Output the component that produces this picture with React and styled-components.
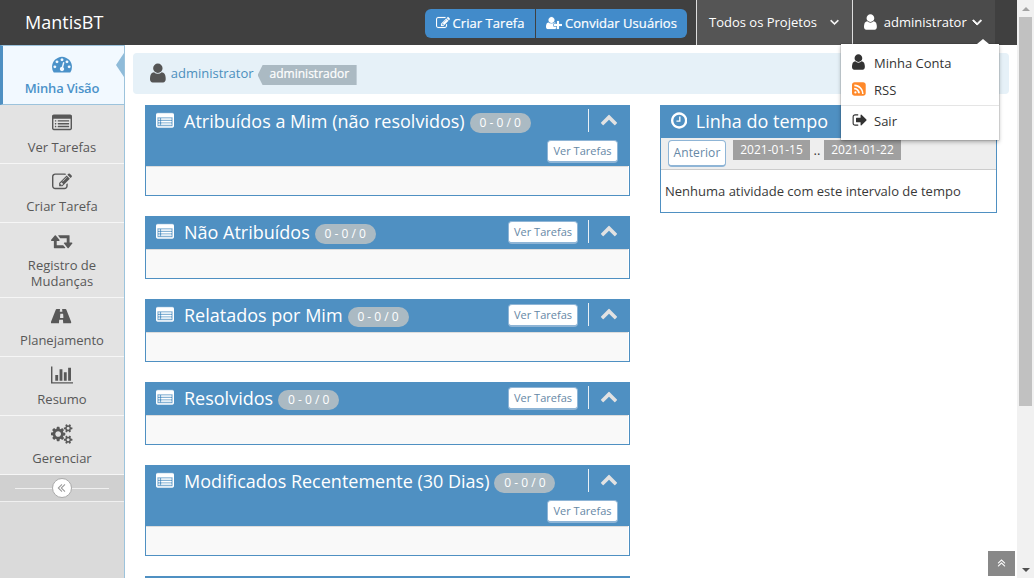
import React from 'react';
import styled, { createGlobalStyle, css } from 'styled-components';

const GlobalStyle = createGlobalStyle`
  * { box-sizing: border-box; }
  html, body { margin: 0; padding: 0; }
  body {
    width: 1034px;
    height: 578px;
    overflow: hidden;
    background: #fff;
    font-family: "Open Sans", "Noto Sans", sans-serif;
    font-size: 13px;
    line-height: 20px;
    color: #393939;
  }
`;

/* Icon outlines share an 1792-unit em; w is the advance width of the glyph. */
const bullet = (y) => `M256 ${y}m32 0h64q32 0 32 32v64q0 32-32 32h-64q-32 0-32-32v-64q0-32 32-32z`;
const rule = (y) => `M512 ${y}m32 0h960q32 0 32 32v64q0 32-32 32h-960q-32 0-32-32v-64q0-32 32-32z`;

const SMALL_COG =
  'v140q0 16-149 31-12 27-30 52 51 113 51 138 0 4-4 7-122 71-124 71-8 0-46-47t-52-68q-20 2-30 2t-30-2q-14 21-52 68t-46 47q-2 0-124-71-4-3-4-7 0-25 51-138-18-25-30-52-149-15-149-31v-140q0-16 149-31 13-29 30-52-51-113-51-138 0-4 4-7 4-2 35-20t59-34 30-16q8 0 46 46.5t52 67.5q20-2 30-2t30 2q51-71 92-112l6-2q4 0 124 70 4 3 4 7 0 25-51 138 17 23 30 52 149 15 149 31z';

const ICONS = {
  dashboard: {
    w: 1792,
    d: 'M384 1152q0-53-37.5-90.5t-90.5-37.5-90.5 37.5-37.5 90.5 37.5 90.5 90.5 37.5 90.5-37.5 37.5-90.5zm192-448q0-53-37.5-90.5t-90.5-37.5-90.5 37.5-37.5 90.5 37.5 90.5 90.5 37.5 90.5-37.5 37.5-90.5zm428 481l101-382q6-26-7.5-48.5t-38.5-29.5-48 6.5-30 39.5l-101 382q-60 5-107 43.5t-63 98.5q-20 77 20 146t117 89 146-20 89-117q16-60-6-117t-72-91zm660-33q0-53-37.5-90.5t-90.5-37.5-90.5 37.5-37.5 90.5 37.5 90.5 90.5 37.5 90.5-37.5 37.5-90.5zm-640-640q0-53-37.5-90.5t-90.5-37.5-90.5 37.5-37.5 90.5 37.5 90.5 90.5 37.5 90.5-37.5 37.5-90.5zm448 192q0-53-37.5-90.5t-90.5-37.5-90.5 37.5-37.5 90.5 37.5 90.5 90.5 37.5 90.5-37.5 37.5-90.5zm320 448q0 261-141 483-19 29-54 29h-1402q-35 0-54-29-141-221-141-483 0-182 71-348t191-286 286-191 348-71 348 71 286 191 191 286 71 348z',
  },
  list: {
    w: 1792,
    d: `${bullet(1152)}${bullet(896)}${bullet(640)}${rule(1152)}${rule(896)}${rule(640)}M1664 1376v-832q0-13-9.500-22.500t-22.500-9.500h-1472q-13 0-22.500 9.500t-9.500 22.500v832q0 13 9.500 22.500t22.500 9.500h1472q13 0 22.500-9.500t9.500-22.500zM1792 288v1088q0 66-47 113t-113 47h-1472q-66 0-113-47t-47-113v-1088q0-66 47-113t113-47h1472q66 0 113 47t47 113z`,
  },
  edit: {
    w: 1792,
    d: 'M888 1184l116-116-152-152-116 116v56h96v96h56zm440-720q-16-16-33 1l-350 350q-17 17-1 33t33-1l350-350q17-17 1-33zm80 594v190q0 119-84.5 203.5t-203.5 84.5h-832q-119 0-203.5-84.5t-84.5-203.5v-832q0-119 84.5-203.5t203.5-84.5h832q63 0 117 25 15 7 18 23 3 17-9 29l-49 49q-14 14-32 8-23-6-45-6h-832q-66 0-113 47t-47 113v832q0 66 47 113t113 47h832q66 0 113-47t47-113v-126q0-13 9-22l64-64q15-15 35-7t20 29zm-96-738l288 288-672 672h-288v-288zm444 132l-92 92-288-288 92-92q28-28 68-28t68 28l152 152q28 28 28 68t-28 68z',
  },
  retweet: {
    w: 1920,
    d: 'M1280 1504q0 13-9.5 22.5t-22.5 9.5h-960q-8 0-13.5-2t-9-7-5.500-8-3-11.500-1-11.500v-600h-192q-26 0-45-19t-19-45q0-24 15-41l320-384q19-22 49-22t49 22l320 384q15 17 15 41 0 26-19 45t-45 19h-192v384h576q16 0 25 11l160 192q7 10 7 21zm640-416q0 24-15 41l-320 384q-20 23-49 23t-49-23l-320-384q-15-17-15-41 0-26 19-45t45-19h192v-384h-576q-16 0-25-12l-160-192q-7-9-7-20 0-13 9.5-22.5t22.5-9.5h960q8 0 13.5 2t9 7 5.5 8 3 11.5 1 11.5v600h192q26 0 45 19t19 45z',
  },
  road: {
    w: 1920,
    d: 'M1111 1044v-4l-24-320q-1-13-11-22.5t-23-9.5h-186q-13 0-23 9.5t-11 22.5l-24 320v4q-1 12 8 20t21 8h244q12 0 21-8t8-20zm702 431q0 73-46 73h-704q13 0 22-9.5t8-22.5l-20-256q-1-13-11-22.5t-23-9.5h-272q-13 0-23 9.5t-11 22.5l-20 256q-1 13 8 22.5t22 9.5h-704q-46 0-46-73 0-54 26-116l417-1044q8-19 26-33t38-14h339q-13 0-23 9.5t-11 22.5l-15 192q-1 14 8 23t22 9h166q13 0 22-9t8-23l-15-192q-1-13-11-22.5t-23-9.5h339q20 0 38 14t26 33l417 1044q26 62 26 116z',
  },
  chart: {
    w: 2048,
    d: 'M640 896v512h-256v-512h256zm384-512v1024h-256v-1024h256zm1024 1152v128h-2048v-1536h128v1408h1920zm-640-896v768h-256v-768h256zm384-384v1152h-256v-1152h256z',
  },
  cogs: {
    w: 1920,
    d: `M896 896q0-106-75-181t-181-75-181 75-75 181 75 181 181 75 181-75 75-181zm768 512q0-52-38-90t-90-38-90 38-38 90q0 53 37.5 90.5t90.5 37.5 90.5-37.5 37.5-90.5zm0-1024q0-52-38-90t-90-38-90 38-38 90q0 53 37.5 90.5t90.5 37.5 90.5-37.5 37.5-90.5zm-384 421v185q0 10-7 19.5t-16 10.5l-155 24q-11 35-32 76 34 48 90 115 7 11 7 20 0 12-7 19-23 30-82.5 89.5t-78.5 59.5q-11 0-21-7l-115-90q-37 19-77 31-11 108-23 155-7 24-30 24h-186q-11 0-20-7.5t-10-17.5l-23-153q-34-10-75-31l-118 89q-7 7-20 7-11 0-21-8-144-133-144-160 0-9 7-19 10-14 41-53t47-61q-23-44-35-82l-152-24q-10-1-17-9.5t-7-19.5v-185q0-10 7-19.5t16-10.5l155-24q11-35 32-76-34-48-90-115-7-11-7-20 0-12 7-20 22-30 82-89t79-59q11 0 21 7l115 90q34-18 77-32 11-108 23-154 7-24 30-24h186q11 0 20 7.5t10 17.5l23 153q34 10 75 31l118-89q8-7 20-7 11 0 21 8 144 133 144 160 0 8-7 19-12 16-42 54t-45 60q23 48 34 82l152 23q10 2 17 10.5t7 19.5zM1920 1338${SMALL_COG}M1920 314${SMALL_COG}`,
  },
  user: {
    w: 1280,
    x: 256,
    d: 'M1536 1399q0 109-62.5 187t-150.5 78h-854q-88 0-150.5-78t-62.5-187q0-85 8.5-160.5t31.5-152 58.5-131 94-89 134.5-34.5q131 128 313 128t313-128q76 0 134.5 34.5t94 89 58.5 131 31.5 152 8.5 160.5zm-256-887q0 159-112.5 271.5t-271.5 112.5-271.5-112.5-112.5-271.5 112.5-271.5 271.5-112.5 271.5 112.5 112.5 271.5z',
  },
  userPlus: {
    w: 2048,
    d: 'M704 896q-159 0-271.5-112.5t-112.5-271.5 112.5-271.5 271.5-112.5 271.5 112.5 112.5 271.5-112.5 271.5-271.5 112.5zm960 128h352q13 0 22.5 9.5t9.5 22.5v192q0 13-9.5 22.5t-22.5 9.5h-352v352q0 13-9.5 22.5t-22.5 9.5h-192q-13 0-22.5-9.5t-9.5-22.5v-352h-352q-13 0-22.5-9.5t-9.5-22.5v-192q0-13 9.5-22.5t22.5-9.5h352v-352q0-13 9.5-22.5t22.5-9.5h192q13 0 22.5 9.5t9.5 22.5v352zm-736 224q0 52 38 90t90 38h256v238q-68 50-171 50h-874q-121 0-194-69t-73-190q0-53 3.5-103.5t14-109 26.5-108.5 43-97.5 62-81 85.5-53.5 111.5-20q19 0 39 17 79 61 154.5 91.5t164.5 30.5 164.5-30.5 154.5-91.5q20-17 39-17 132 0 217 96h-223q-52 0-90 38t-38 90v192z',
  },
  clock: {
    w: 1536,
    x: 128,
    d: 'M1024 544v448q0 14-9 23t-23 9h-320q-14 0-23-9t-9-23v-64q0-14 9-23t23-9h224v-352q0-14 9-23t23-9h64q14 0 23 9t9 23zm416 352q0-148-73-273t-198-198-273-73-273 73-198 198-73 273 73 273 198 198 273 73 273-73 198-198 73-273zm224 0q0 209-103 385.500t-279.500 279.500-385.500 103-385.500-103-279.500-279.500-103-385.500 103-385.500 279.500-279.500 385.500-103 385.500 103 279.500 279.500 103 385.500z',
  },
  rss: {
    w: 1536,
    x: 128,
    d: 'M640 1280a128 128 0 1 0-256 0a128 128 0 1 0 256 0zM1023 1375q-15-253-192-431t-431-192q-32 0-32 32v128q0 30 30 32 160 12 274 125t125 274q2 32 32 32h128q32 0 66 0zM1407 1375q-6-200-83-375t-212-310-310-212-375-83q-35 0-35 32v128q0 30 31 32 168 6 317 74t260 179 179 260 74 317q2 31 32 31h128q14 0 24-10t8-23zM1664 416v960q0 119-84.500 203.500t-203.500 84.500h-960q-119 0-203.500-84.500t-84.500-203.500v-960q0-119 84.500-203.500t203.500-84.500h960q119 0 203.500 84.500t84.500 203.500z',
  },
  signOut: {
    w: 1664,
    d: 'M704 1440q0 4 1 20t.5 26.5-3 23.5-10 19.5-20.5 6.5h-320q-119 0-203.5-84.5t-84.5-203.5v-704q0-119 84.5-203.5t203.5-84.5h320q13 0 22.5 9.5t9.5 22.5q0 4 1 20t.5 26.5-3 23.5-10 19.5-20.5 6.5h-320q-66 0-113 47t-47 113v704q0 66 47 113t113 47h312l11.5 1 11.5 3 8 5.5 7 9 2 13.5zm928-544q0 26-19 45l-544 544q-19 19-45 19t-45-19-19-45v-288h-448q-26 0-45-19t-19-45v-384q0-26 19-45t45-19h448v-288q0-26 19-45t45-19 45 19l544 544q19 19 19 45z',
  },
  chevronUp: {
    w: 1792,
    d: 'M1683 1331l-166 165q-19 19-45 19t-45-19l-531-531-531 531q-19 19-45 19t-45-19l-166-165q-19-19-19-45.5t19-45.5l742-741q19-19 45-19t45 19l742 741q19 19 19 45.5t-19 45.5z',
  },
  angleDown: {
    w: 1152,
    x: 320,
    d: 'M1395 736q0 13-10 23l-466 466q-10 10-23 10t-23-10l-466-466q-10-10-10-23t10-23l50-50q10-10 23-10t23 10l393 393 393-393q10-10 23-10t23 10l50 50q10 10 10 23z',
  },
  doubleUp: {
    w: 1152,
    x: 320,
    d: 'M896 915l466 466q10 10 10 23t-10 23l-50 50q-23 20-46 0l-370-370-370 370q-23 20-46 0l-50-50q-20-23 0-46zM896 531l466 466q10 10 10 23t-10 23l-50 50q-23 20-46 0l-370-370-370 370q-23 20-46 0l-50-50q-20-23 0-46z',
  },
  doubleLeft: {
    w: 1280,
    x: 192,
    d: 'M843 896l393-393q20-23 0-46l-50-50q-23-20-46 0l-466 466q-20 23 0 46l466 466q23 20 46 0l50-50q20-23 0-46zM459 896l393-393q20-23 0-46l-50-50q-23-20-46 0l-466 466q-20 23 0 46l466 466q23 20 46 0l50-50q20-23 0-46z',
  },
};

const Svg = styled.svg`
  display: block;
  flex: none;
  fill: currentColor;
  stroke: currentColor;
`;

function Icon({ name, size, weight = 0 }) {
  const { w, d, x = 0 } = ICONS[name];
  return (
    <Svg
      width={(w / 1792) * size}
      height={size}
      viewBox={`${x} 0 ${w} 1792`}
      strokeWidth={weight}
      aria-hidden="true"
    >
      <path fillRule="evenodd" d={d} />
    </Svg>
  );
}

const Window = styled.div`
  display: flex;
  width: 1034px;
  height: 578px;
  overflow: hidden;
`;

const Page = styled.div`
  position: relative;
  display: flex;
  flex-direction: column;
  width: 1017px;
  height: 578px;
`;

const Navbar = styled.header`
  display: flex;
  flex: none;
  height: 45px;
  background: #404040;
  color: #fff;
`;

const Brand = styled.div`
  flex: 1;
  padding: 9px 0 0 25px;
  font-size: 18px;
  line-height: 26px;
`;

const ButtonGroup = styled.div`
  display: flex;
  gap: 1px;
  margin: 9px 9px 0 0;
  height: 29px;
`;

const PrimaryButton = styled.a`
  display: flex;
  align-items: center;
  justify-content: center;
  gap: 3px;
  width: ${(p) => p.$width}px;
  padding-bottom: 1px;
  background: #428bca;
  font-size: 13px;
  letter-spacing: 0.05px;
  line-height: 20px;
  white-space: nowrap;
  -webkit-text-stroke: 0.2px #fff;
  border-radius: ${(p) => (p.$side === 'left' ? '6px 0 0 6px' : '0 6px 6px 0')};
`;

const ProjectMenu = styled.div`
  display: flex;
  align-items: center;
  justify-content: space-between;
  width: 156px;
  padding: 0 13px 2px 12px;
  border-left: 1px solid #ddd;
  background: #555;
`;

const UserMenu = styled.div`
  position: relative;
  display: flex;
  align-items: center;
  width: 143px;
  margin-right: 22px;
  padding: 0 0 2px 11px;
  border-left: 1px solid #ddd;
  background: #4b4b4b;
`;

const UserName = styled.span`
  margin: 0 5px 0 7px;
`;

const Dropdown = styled.div`
  position: absolute;
  z-index: 5;
  top: 44px;
  right: -4px;
  width: 158px;
  height: 96px;
  padding-top: 5px;
  background: #fff;
  color: #333;
  box-shadow: 0 2px 4px rgba(0, 0, 0, 0.3), 0 0 1px rgba(0, 0, 0, 0.5);
  &::before {
    content: '';
    position: absolute;
    top: -5px;
    right: 10px;
    border: solid transparent;
    border-width: 0 6px 5px;
    border-bottom-color: #fff;
  }
`;

const MenuItem = styled.a`
  display: flex;
  align-items: center;
  gap: 8px;
  height: 27px;
  padding-left: 11px;
`;

const MenuIcon = styled.span`
  display: flex;
  width: 14px;
  padding-bottom: 2px;
  color: ${(p) => p.$color || '#333'};
`;

const MenuDivider = styled.div`
  height: 1px;
  margin: 2px 0 1px;
  background: #e5e5e5;
`;

const Body = styled.div`
  display: flex;
  flex: 1;
  min-height: 0;
`;

const Sidebar = styled.nav`
  flex: none;
  width: 125px;
  border-right: 1px solid #9cc3dc;
  background: #dadada;
`;

const SideItem = styled.a`
  display: flex;
  flex-direction: column;
  align-items: center;
  height: ${(p) => p.$height || 59}px;
  padding-top: 8px;
  border-bottom: 1px solid #f6f6f6;
  background: #e3e3e3;
  color: #585858;
  line-height: 16px;
  text-align: center;
  ${(p) =>
    p.$active &&
    css`
      position: relative;
      height: 60px;
      padding: 8px 3px 0 0;
      border-top: 1px solid #9cc3dc;
      border-bottom-color: #9cc3dc;
      border-left: 3px solid #4f90c2;
      background: #f2f9ff;
      color: #4b92c9;
      font-weight: 600;
      letter-spacing: -0.2px;
      &::after {
        content: '';
        position: absolute;
        top: 7px;
        right: 0;
        border: solid transparent;
        border-width: 12px 8px 12px 0;
        border-right-color: #8fbbd9;
      }
    `}
`;

const SideLabel = styled.span`
  width: 90px;
  margin-top: 6px;
`;

const Collapse = styled.div`
  display: flex;
  align-items: center;
  height: 27px;
  padding: 0 15px;
  border-bottom: 1px solid #f0f0f0;
  background: #d0d0d0;
`;

const CollapseLine = styled.span`
  flex: 1;
  height: 1px;
  background: #f0f0f0;
`;

const CollapseButton = styled.span`
  display: flex;
  align-items: center;
  justify-content: center;
  width: 20px;
  height: 20px;
  border: 1px solid #aaa;
  border-radius: 50%;
  background: #fff;
  color: #999;
`;

const Main = styled.main`
  flex: 1;
  padding: 8px 8px 0;
`;

const Breadcrumbs = styled.div`
  display: flex;
  align-items: center;
  height: 41px;
  padding: 0 0 2px 17px;
  border-radius: 4px;
  background: #e6f1f8;
  color: #555;
`;

const UserLink = styled.a`
  margin-left: 5px;
  color: #4c8fbd;
`;

const RoleTag = styled.span`
  height: 20px;
  width: 99px;
  margin: 5px 0 0 4px;
  padding-left: 12px;
  background: #abbac3;
  color: #fff;
  font-size: 12px;
  font-weight: 500;
  line-height: 18px;
  -webkit-text-stroke: 0.2px #fff;
  clip-path: polygon(0 50%, 5px 0, 100% 0, 100% 100%, 5px 100%);
`;

const Columns = styled.div`
  display: flex;
  align-items: flex-start;
  gap: 30px;
  padding: 11px 12px 0;
`;

const Stack = styled.div`
  display: flex;
  flex-direction: column;
  gap: 20px;
  width: 485px;
`;

const Panel = styled.section`
  width: ${(p) => p.$width || 485}px;
  border: 1px solid #4f90c2;
  background: #fff;
`;

const PanelHeader = styled.div`
  display: flex;
  flex-wrap: wrap;
  align-items: flex-start;
  align-content: flex-start;
  height: ${(p) => (p.$tall ? 60 : 32)}px;
  padding: 0 11px 0 10px;
  background: #4f90c2;
  color: #fff;
`;

const PanelTitle = styled.h4`
  display: flex;
  align-items: center;
  gap: ${(p) => p.$gap || 10}px;
  height: 29px;
  margin: 0;
  font-size: 18px;
  font-weight: 400;
  white-space: nowrap;
`;

const Badge = styled.span`
  width: 61px;
  height: 20px;
  margin: 7px auto 0 5px;
  border-radius: 10px;
  background: #abbac3;
  font-size: 12px;
  line-height: 19px;
  text-align: center;
`;

const Toggle = styled.span`
  display: flex;
  align-items: center;
  justify-content: flex-end;
  width: 30px;
  height: 23px;
  margin-top: 3px;
  margin-left: ${(p) => (p.$tall ? 0 : 10)}px;
  padding-bottom: 3px;
  border-left: 1px solid #e8f0f6;
  color: #e2e2e2;
`;

const ViewButton = styled.a`
  width: ${(p) => (p.$tall ? 71 : 70)}px;
  height: 23px;
  margin: ${(p) => (p.$tall ? '5px 0 0 auto' : '4px 0 0')};
  border: 1px solid #8fb5d6;
  border-bottom-width: 2px;
  border-radius: 4px;
  background: #fff;
  color: #6688a6;
  font-size: 11px;
  line-height: 19px;
  text-align: center;
`;

const PanelBody = styled.div`
  height: 29px;
  margin-right: 1px;
  border-top: 1px solid #ddd;
  background: #f9f9f9;
`;

const RangeBar = styled.div`
  display: flex;
  height: 32px;
  padding: 2px 7px 0;
  border-bottom: 1px solid #ccc;
  background: #eee;
`;

const PreviousButton = styled.a`
  width: 58px;
  height: 27px;
  margin-right: 7px;
  border: 1px solid #8fb5d6;
  border-bottom-width: 2px;
  border-radius: 4px;
  background: #fff;
  color: #6688a6;
  font-size: 12px;
  letter-spacing: 0.1px;
  line-height: 24px;
  text-align: center;
`;

const DateLabel = styled.span`
  width: 77px;
  height: 20px;
  background: #a0a0a0;
  color: #fff;
  font-size: 12px;
  line-height: 19px;
  text-align: center;
`;

const Dots = styled.span`
  width: 14px;
  text-align: center;
`;

const EmptyNote = styled.p`
  height: 42px;
  margin: 0;
  padding: 11px 4px;
`;

const ScrollTop = styled.a`
  position: absolute;
  right: 2px;
  bottom: 2px;
  display: flex;
  align-items: center;
  justify-content: center;
  width: 27px;
  height: 25px;
  padding-bottom: 3px;
  background: #888;
  color: #fff;
`;

const Scrollbar = styled.div`
  display: flex;
  flex-direction: column;
  align-items: center;
  justify-content: space-between;
  width: 17px;
  height: 578px;
  background: #f1f1f1;
`;

const Arrow = styled.span`
  display: flex;
  align-items: center;
  justify-content: center;
  width: 17px;
  height: 17px;
  &::before {
    content: '';
    border: solid transparent;
    ${(p) =>
      p.$up
        ? 'border-width: 0 4px 4px; border-bottom-color: #a3a3a3;'
        : 'border-width: 4px 4px 0; border-top-color: #505050;'}
  }
`;

const Thumb = styled.span`
  width: 13px;
  height: 389px;
  margin-bottom: auto;
  background: #c1c1c1;
`;

const SIDE_ITEMS = [
  { icon: 'dashboard', label: 'Minha Visão', active: true },
  { icon: 'list', label: 'Ver Tarefas' },
  { icon: 'edit', label: 'Criar Tarefa' },
  { icon: 'retweet', label: 'Registro de Mudanças', height: 75 },
  { icon: 'road', label: 'Planejamento' },
  { icon: 'chart', label: 'Resumo' },
  { icon: 'cogs', label: 'Gerenciar' },
];

const PANELS = [
  { title: 'Atribuídos a Mim (não resolvidos)', tall: true },
  { title: 'Não Atribuídos' },
  { title: 'Relatados por Mim' },
  { title: 'Resolvidos' },
  { title: 'Modificados Recentemente (30 Dias)', tall: true },
];

function TaskPanel({ title, tall }) {
  const button = <ViewButton $tall={tall}>Ver Tarefas</ViewButton>;
  return (
    <Panel>
      <PanelHeader $tall={tall}>
        <PanelTitle>
          <Icon name="list" size={18} weight={50} />
          {title}
        </PanelTitle>
        <Badge>0 - 0 / 0</Badge>
        {!tall && button}
        <Toggle $tall={tall}>
          <Icon name="chevronUp" size={18} />
        </Toggle>
        {tall && button}
      </PanelHeader>
      <PanelBody />
    </Panel>
  );
}

export default function App() {
  return (
    <Window>
      <GlobalStyle />
      <Page>
        <Navbar>
          <Brand>MantisBT</Brand>
          <ButtonGroup>
            <PrimaryButton $side="left" $width={110}>
              <Icon name="edit" size={14} weight={20} />
              Criar Tarefa
            </PrimaryButton>
            <PrimaryButton $side="right" $width={151}>
              <Icon name="userPlus" size={14} weight={20} />
              Convidar Usuários
            </PrimaryButton>
          </ButtonGroup>
          <ProjectMenu>
            Todos os Projetos
            <Icon name="angleDown" size={14} weight={100} />
          </ProjectMenu>
          <UserMenu>
            <Icon name="user" size={18} />
            <UserName>administrator</UserName>
            <Icon name="angleDown" size={16} weight={100} />
            <Dropdown>
              <MenuItem>
                <MenuIcon>
                  <Icon name="user" size={18} />
                </MenuIcon>
                Minha Conta
              </MenuItem>
              <MenuItem>
                <MenuIcon $color="#ff892a">
                  <Icon name="rss" size={16} />
                </MenuIcon>
                RSS
              </MenuItem>
              <MenuDivider />
              <MenuItem>
                <MenuIcon>
                  <Icon name="signOut" size={16} />
                </MenuIcon>
                Sair
              </MenuItem>
            </Dropdown>
          </UserMenu>
        </Navbar>
        <Body>
          <Sidebar>
            {SIDE_ITEMS.map((item) => (
              <SideItem key={item.label} $active={item.active} $height={item.height}>
                <Icon name={item.icon} size={20} />
                <SideLabel>{item.label}</SideLabel>
              </SideItem>
            ))}
            <Collapse>
              <CollapseLine />
              <CollapseButton>
                <Icon name="doubleLeft" size={14} />
              </CollapseButton>
              <CollapseLine />
            </Collapse>
          </Sidebar>
          <Main>
            <Breadcrumbs>
              <Icon name="user" size={22} />
              <UserLink>administrator</UserLink>
              <RoleTag>administrador</RoleTag>
            </Breadcrumbs>
            <Columns>
              <Stack>
                {PANELS.map((panel) => (
                  <TaskPanel key={panel.title} {...panel} />
                ))}
                <Panel>
                  <PanelHeader />
                </Panel>
              </Stack>
              <Panel $width={337}>
                <PanelHeader>
                  <PanelTitle $gap={8.5}>
                    <Icon name="clock" size={19} />
                    Linha do tempo
                  </PanelTitle>
                </PanelHeader>
                <RangeBar>
                  <PreviousButton>Anterior</PreviousButton>
                  <DateLabel>2021-01-15</DateLabel>
                  <Dots>..</Dots>
                  <DateLabel>2021-01-22</DateLabel>
                </RangeBar>
                <EmptyNote>Nenhuma atividade com este intervalo de tempo</EmptyNote>
              </Panel>
            </Columns>
          </Main>
        </Body>
        <ScrollTop>
          <Icon name="doubleUp" size={14} />
        </ScrollTop>
      </Page>
      <Scrollbar>
        <Arrow $up />
        <Thumb />
        <Arrow />
      </Scrollbar>
    </Window>
  );
}
